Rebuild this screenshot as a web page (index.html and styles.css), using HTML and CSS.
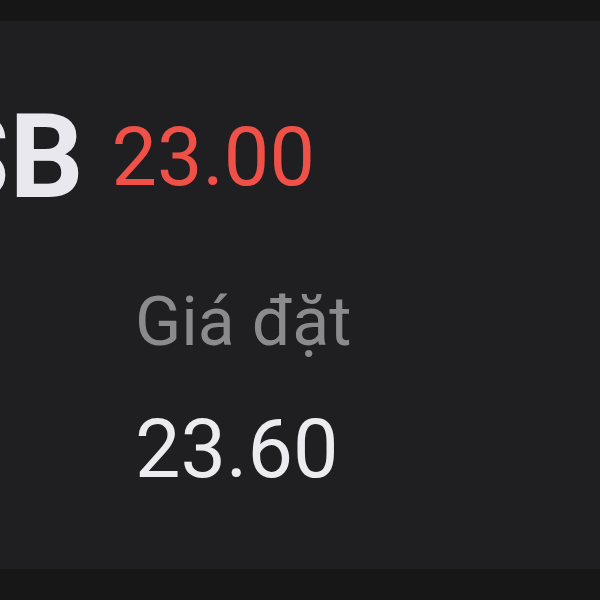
FILE: index.html
```html
<!DOCTYPE html>
<html lang="vi">
<head>
    <meta charset="UTF-8">
    <meta name="viewport" content="width=device-width, initial-scale=1.0">
    <title>Giá đặt</title>
    <link rel="stylesheet" href="styles.css">
</head>
<body>
    <div class="top-bar"></div>

    <div class="order-card">
        <!-- Mã và giá hiện tại -->
        <div class="order-head">
            <span class="symbol">SB</span>
            <span class="price down">23.00</span>
        </div>

        <!-- Giá đặt lệnh -->
        <div class="order-detail">
            <div class="label">Giá đặt</div>
            <div class="value">23.60</div>
        </div>
    </div>

    <div class="bottom-bar"></div>
</body>
</html>
```

FILE: styles.css
```css
body {
    margin: 0;
    height: 600px;
    overflow: hidden;
    background-color: #161616;
    font-family: Roboto, "Liberation Sans", sans-serif;
    display: flex;
    flex-direction: column;
}
.top-bar {
    height: 21px;
    background: #161616;
}
.order-card {
    height: 548px;
    background: #1f1f21;
    padding-top: 78px;
    box-sizing: border-box;
    overflow: hidden;
}
.order-head {
    display: flex;
    align-items: center;
    gap: 28px;
    margin-left: -62px;
}
.symbol {
    font-size: 116px;
    font-weight: bold;
    line-height: 1;
    color: #e8e8ee;
}
.price {
    font-size: 81px;
    line-height: 1;
}
.price.down {
    color: #ef5048;
}
.order-detail {
    padding-left: 135px;
    margin-top: 73px;
}
.label {
    font-size: 68px;
    line-height: 1;
    color: #8b8b8d;
}
.value {
    font-size: 81px;
    line-height: 1;
    color: #ececf0;
    margin-top: 53px;
}
.bottom-bar {
    flex: 1;
    background: #171717;
}
```
